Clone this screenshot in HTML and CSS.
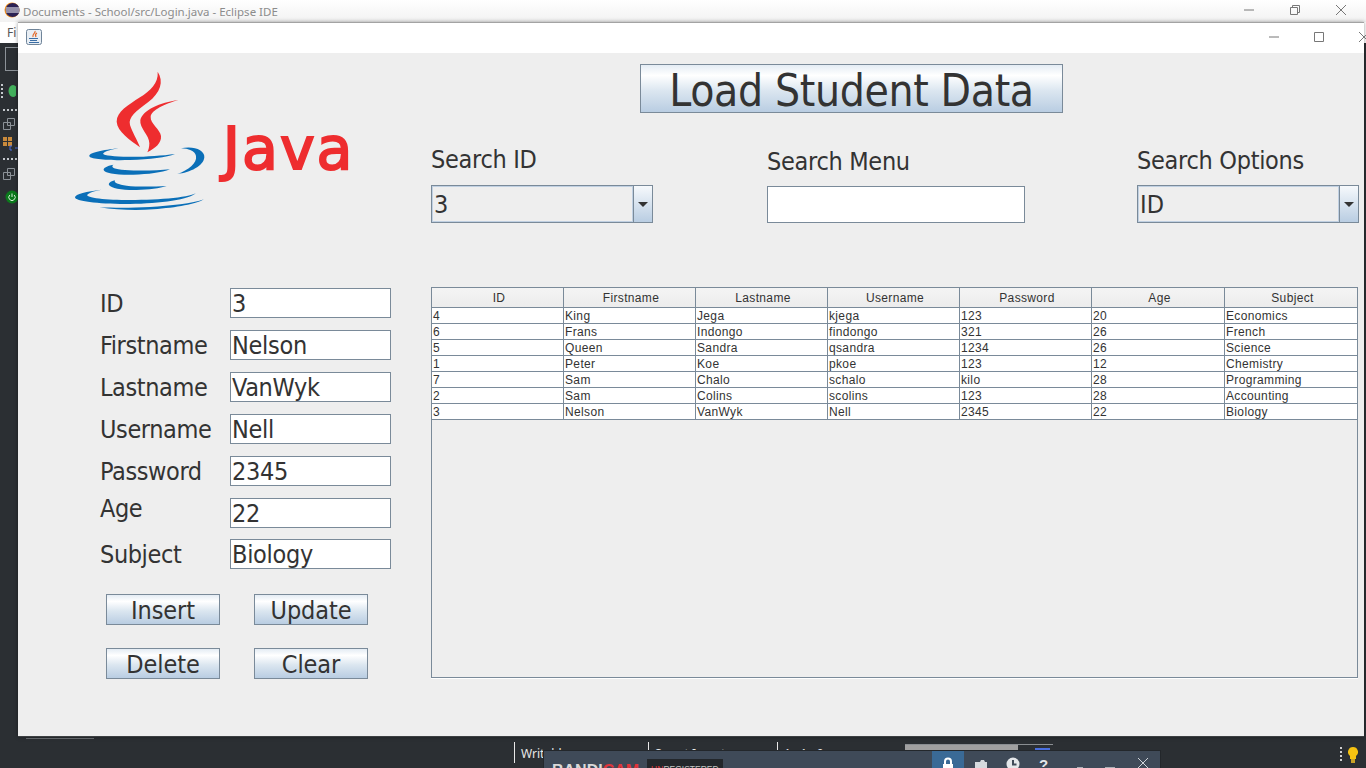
FILE: index.html

```html
<!DOCTYPE html>
<html lang="en">
<head>
    <meta charset="UTF-8">
    <meta name="viewport" content="width=device-width, initial-scale=1.0">
    <title>Student Data</title>
    <link rel="stylesheet" href="styles.css">
</head>
<body>
    <div class="desktop">
        <div class="ide-titlebar">
            <svg class="ide-logo" viewBox="0 0 16 16" width="16" height="16">
                <circle cx="8" cy="8" r="7.5" fill="#f7941e"/>
                <circle cx="8.6" cy="8" r="7" fill="#2c2255"/>
                <path d="M2 6h13M1.800 8h13.600M2 10h13" stroke="#fff" stroke-width="1"/>
            </svg>
            <span class="ide-title">Documents - School/src/Login.java - Eclipse IDE</span>
            <div class="win-controls ide-controls">
                <svg viewBox="0 0 12 12" width="12" height="12"><path d="M1 6h10" stroke="#777"/></svg>
                <svg viewBox="0 0 12 12" width="12" height="12"><path d="M1.500 3.500h7v7h-7zM3.500 3.500v-2h7v7h-2" fill="none" stroke="#777"/></svg>
                <svg viewBox="0 0 12 12" width="12" height="12"><path d="M1 1l10 10M11 1L1 11" stroke="#777"/></svg>
            </div>
        </div>
        <div class="ide-menu">Fi</div>
        <div class="ide-side">
            <div class="side-box"></div>
            <div class="side-perspective">
                <div class="side-grip"></div>
                <svg viewBox="0 0 16 14" width="16" height="14"><ellipse cx="13" cy="7" rx="4.500" ry="6" fill="#43b05c"/></svg>
            </div>
            <div class="side-dots"></div>
            <svg class="side-icon" viewBox="0 0 16 14" width="16" height="14"><path d="M7.500 1.500h7v7h-7zM3.500 5.500h7v7h-7z" fill="none" stroke="#8c9298"/></svg>
            <svg class="side-icon side-icon-outline" viewBox="0 0 16 16" width="16" height="16"><path d="M1 1h4v4H1zM6 1h4v4H6zM1 6h4v4H1zM6 6h4v4H6z" fill="#c98a3c"/><path d="M10 10H8v4h2M13 12h3" fill="none" stroke="#4a6fe0"/></svg>
            <div class="side-dots side-dots-low"></div>
            <svg class="side-icon" viewBox="0 0 16 14" width="16" height="14"><path d="M7.500 1.500h7v7h-7zM3.500 5.500h7v7h-7z" fill="none" stroke="#8c9298"/></svg>
            <svg class="side-icon side-icon-power" viewBox="0 0 14 14" width="14" height="14"><circle cx="7" cy="7" r="6.500" fill="#0b7a1c"/><path d="M7 3.500v3.500M4.800 5a3.200 3.200 0 1 0 4.400 0" fill="none" stroke="#d8f0d8"/></svg>
        </div>
        <div class="ide-tab-line"></div>

        <div class="status-bar">
            <span class="status-cell status-writable">Writable</span>
            <span class="status-cell status-insert">Smart Insert</span>
            <span class="status-cell status-pos">1 : 1 : 0</span>
            <div class="status-heap"><div class="status-heap-used"></div><div class="status-heap-mark"></div></div>
            <div class="status-grip"></div>
            <div class="status-bulb">
                <svg viewBox="0 0 10 16" width="10" height="16"><path d="M5 0a5 5 0 0 1 3 9v3H2V9a5 5 0 0 1 3-9z" fill="#f5c211"/><path d="M3 12h4v4H3z" fill="#c9a227"/></svg>
            </div>
        </div>

        <div class="bandicam">
            <span class="bandi-name">BANDI<em>CAM</em></span>
            <span class="bandi-tag"><em>UN</em>REGISTERED</span>
            <div class="bandi-tools">
                <span class="bandi-lock">
                    <svg viewBox="0 0 14 16" width="14" height="16"><path d="M4 7V4.500a3 3 0 0 1 6 0V7" fill="none" stroke="#fff" stroke-width="2"/><path d="M2 7h10v9H2z" fill="#fff"/></svg>
                </span>
                <svg class="bandi-folder" viewBox="0 0 14 16" width="14" height="16"><path d="M1 3h5l1-2h3l1 2h2v13H1z" fill="#d6dade"/></svg>
                <svg class="bandi-clock" viewBox="0 0 14 16" width="14" height="16"><circle cx="7" cy="7" r="6.500" fill="#e4e7ea"/><path d="M7 3v4.500h3.500" fill="none" stroke="#3f4a58" stroke-width="2"/></svg>
                <span class="bandi-help">?</span>
                <span class="bandi-min"></span>
                <span class="bandi-max"></span>
                <svg class="bandi-close" viewBox="0 0 12 12" width="12" height="12"><path d="M1 1l10 10M11 1L1 11" stroke="#cfd4d9"/></svg>
            </div>
        </div>

        <div class="java-window">
            <div class="window-title">
                <svg class="java-icon" viewBox="0 0 16 16" width="16" height="16">
                    <rect x="0.500" y="0.500" width="15" height="15" rx="2" fill="#e8eef4" stroke="#6f8499"/>
                    <path d="M9 2c1 2-3 3-2 6M11 4c-2 1-2 2-1 4" fill="none" stroke="#e2692a" stroke-width="1.200"/>
                    <path d="M3 9.500h9M4 11.500h7M3 13.500h10" stroke="#3b6ea5"/>
                </svg>
                <div class="win-controls java-controls">
                    <svg viewBox="0 0 12 12" width="12" height="12"><path d="M1 6h10" stroke="#777"/></svg>
                    <svg viewBox="0 0 12 12" width="12" height="12"><path d="M1.500 1.500h9v9h-9z" fill="none" stroke="#777"/></svg>
                    <svg viewBox="0 0 12 12" width="12" height="12"><path d="M1 1l10 10M11 1L1 11" stroke="#777"/></svg>
                </div>
            </div>

            <div class="window-body">
                <div class="left-panel">
                    <div class="logo">
                        <svg class="logo-mark" viewBox="45 30 852 429" width="284" height="143">
                            <path fill="#ee2d2f" d="M293 35C312 65 302 97 264 127C228 154 204 172 210 195C216 215 232 240 240 262C210 240 172 215 170 185C170 155 205 135 240 112C270 92 296 70 293 35Z"/>
                            <path fill="#ee2d2f" d="M355 120C300 128 248 150 241 180C238 205 268 225 268 250C268 262 265 270 262 277C285 265 305 250 303 228C301 208 270 190 272 170C274 150 315 132 355 120Z"/>
                            <path fill="#0a6fb8" d="M175 265C130 270 88 278 88 288C88 298 150 302 210 300C270 298 320 292 345 282C300 288 240 292 190 290C150 289 125 285 130 280C135 274 155 268 175 265Z"/>
                            <path fill="#0a6fb8" d="M363 265C400 256 435 270 433 292C431 318 390 338 352 342C385 330 412 310 408 288C405 272 385 266 363 265Z"/>
                            <path fill="#0a6fb8" d="M160 314C140 318 130 324 131 330C133 340 170 345 220 344C265 343 305 338 330 328C290 332 235 333 195 330C165 328 150 322 160 314Z"/>
                            <path fill="#0a6fb8" d="M165 361C150 365 145 370 147 375C152 385 190 391 230 390C265 389 300 385 320 378C280 380 230 381 200 377C175 374 160 368 165 361Z"/>
                            <path fill="#0a6fb8" d="M125 389C80 394 45 402 45 412C45 424 120 433 210 432C300 431 390 420 410 397C400 412 300 420 210 420C140 420 75 413 82 404C88 397 105 392 125 389Z"/>
                            <path fill="#0a6fb8" d="M118 442C170 450 230 452 280 448C350 443 410 432 432 418C400 430 330 438 270 441C220 444 165 444 118 442Z"/>
                            <text class="logo-word" x="488" y="328">Java</text>
                        </svg>
                    </div>

                    <div class="student-form">
                        <label class="form-label">ID</label>
                        <div class="text-field">3</div>
                        <label class="form-label">Firstname</label>
                        <div class="text-field">Nelson</div>
                        <label class="form-label">Lastname</label>
                        <div class="text-field">VanWyk</div>
                        <label class="form-label">Username</label>
                        <div class="text-field">Nell</div>
                        <label class="form-label">Password</label>
                        <div class="text-field">2345</div>
                        <label class="form-label form-label-age">Age</label>
                        <div class="text-field">22</div>
                        <label class="form-label form-last">Subject</label>
                        <div class="text-field form-last">Biology</div>
                    </div>

                    <div class="form-buttons">
                        <button class="nimbus-btn">Insert</button>
                        <button class="nimbus-btn">Update</button>
                        <button class="nimbus-btn">Delete</button>
                        <button class="nimbus-btn">Clear</button>
                    </div>
                </div>

                <div class="right-panel">
                    <button class="nimbus-btn load-btn">Load Student Data</button>

                    <div class="search-row">
                        <div class="search-field">
                            <label class="search-label">Search ID</label>
                            <div class="combo">
                                <span class="combo-value">3</span>
                                <span class="combo-arrow"></span>
                            </div>
                        </div>
                        <div class="search-field">
                            <label class="search-label search-label-menu">Search Menu</label>
                            <div class="text-field search-input"></div>
                        </div>
                        <div class="search-field">
                            <label class="search-label search-label-options">Search Options</label>
                            <div class="combo">
                                <span class="combo-value">ID</span>
                                <span class="combo-arrow"></span>
                            </div>
                        </div>
                    </div>

                    <div class="table-pane">
                        <table class="data-table">
                            <thead>
                                <tr><th>ID</th><th>Firstname</th><th>Lastname</th><th>Username</th><th>Password</th><th>Age</th><th>Subject</th></tr>
                            </thead>
                            <tbody>
                                <tr><td>4</td><td>King</td><td>Jega</td><td>kjega</td><td>123</td><td>20</td><td>Economics</td></tr>
                                <tr><td>6</td><td>Frans</td><td>Indongo</td><td>findongo</td><td>321</td><td>26</td><td>French</td></tr>
                                <tr><td>5</td><td>Queen</td><td>Sandra</td><td>qsandra</td><td>1234</td><td>26</td><td>Science</td></tr>
                                <tr><td>1</td><td>Peter</td><td>Koe</td><td>pkoe</td><td>123</td><td>12</td><td>Chemistry</td></tr>
                                <tr><td>7</td><td>Sam</td><td>Chalo</td><td>schalo</td><td>kilo</td><td>28</td><td>Programming</td></tr>
                                <tr><td>2</td><td>Sam</td><td>Colins</td><td>scolins</td><td>123</td><td>28</td><td>Accounting</td></tr>
                                <tr><td>3</td><td>Nelson</td><td>VanWyk</td><td>Nell</td><td>2345</td><td>22</td><td>Biology</td></tr>
                            </tbody>
                        </table>
                    </div>
                </div>
            </div>
        </div>
    </div>
</body>
</html>
```

FILE: styles.css

```css
body {
    margin: 0;
    overflow: hidden;
    font-family: "DejaVu Sans", sans-serif;
    font-stretch: condensed;
}
.desktop {
    position: relative;
    width: 1366px;
    height: 768px;
    overflow: hidden;
    background-color: #2b2f33;
    display: flex;
    flex-direction: column;
}

/* eclipse behind the app */
.ide-titlebar {
    height: 22px;
    background: linear-gradient(#ffffff, #f2f2f2);
    display: flex;
    align-items: center;
    padding-left: 4px;
    font-family: "Noto Sans", sans-serif;
    font-stretch: normal;
}
.ide-logo {
    margin-right: 3px;
    margin-top: -2px;
}
.ide-title {
    font-size: 11.5px;
    color: #8c8c8c;
}
.win-controls {
    display: flex;
}
.ide-controls {
    gap: 34px;
    margin: -3px 19px 0 auto;
}
.ide-menu {
    height: 21px;
    background-color: #ffffff;
    padding-left: 7px;
    font: 12px/21px "Noto Sans", sans-serif;
    color: #555555;
}
.ide-side {
    width: 18px;
    display: flex;
    flex-direction: column;
    align-items: flex-start;
}
.side-box {
    width: 16px;
    height: 24px;
    margin: 4px 0 0 5px;
    border: 1px solid #8c9298;
    box-sizing: border-box;
}
.side-perspective {
    display: flex;
    margin-top: 13px;
}
.side-grip {
    width: 2px;
    height: 14px;
    margin-left: 1px;
    margin-right: -3px;
    background-image: linear-gradient(#c4c8cc 50%, transparent 50%);
    background-size: 2px 4px;
}
.side-dots {
    width: 16px;
    height: 2px;
    margin: 11px 0 6px 3px;
    background-image: linear-gradient(90deg, #c4c8cc 50%, transparent 50%);
    background-size: 4px 2px;
}
.side-dots-low {
    margin: 4px 0 7px 3px;
}
.side-icon {
    margin-bottom: 5px;
}
.side-icon-outline {
    margin: 0 0 2px 2px;
}
.side-icon-power {
    margin: 4px 0 0 5px;
}
.ide-tab-line {
    position: absolute;
    left: 26px;
    top: 738px;
    width: 68px;
    height: 1px;
    background-color: #6c7074;
}

/* status bar */
.status-bar {
    position: absolute;
    left: 0;
    right: 0;
    bottom: 0;
    height: 27px;
    font: 12px "Noto Sans", sans-serif;
    color: #e8e8e8;
}
.status-cell {
    position: absolute;
    top: 1px;
    height: 21px;
    padding-left: 6px;
    border-left: 1px solid #e8e8e8;
    line-height: 24px;
}
.status-writable { left: 514px; }
.status-insert { left: 648px; }
.status-pos { left: 777px; }
.status-heap {
    position: absolute;
    left: 905px;
    top: 3px;
    width: 148px;
    height: 7px;
    box-sizing: border-box;
    border-top: 1px solid #8a8e92;
    display: flex;
}
.status-heap-used {
    width: 113px;
    background-color: #a0a0a0;
}
.status-heap-mark {
    width: 15px;
    height: 3px;
    margin: 3px 0 0 17px;
    background-color: #4a6fe0;
}
.status-grip {
    position: absolute;
    left: 1340px;
    top: 6px;
    width: 2px;
    height: 15px;
    background-image: linear-gradient(#d0d0d0 50%, transparent 50%);
    background-size: 2px 4px;
}
.status-bulb {
    position: absolute;
    left: 1348px;
    top: 6px;
}

.bandicam {
    position: absolute;
    left: 543px;
    top: 750px;
    width: 618px;
    height: 18px;
    box-sizing: border-box;
    border: 1px solid #23272b;
    border-bottom: none;
    background-color: #3f4a58;
    display: flex;
    overflow: hidden;
    z-index: 1;
}
.bandi-name {
    margin: 10px 0 0 8px;
    font: bold 16px/20px "Liberation Sans", sans-serif;
    color: #d9d9d9;
}
.bandi-name em,
.bandi-tag em {
    font-style: normal;
    color: #e0343a;
}
.bandi-tag {
    height: 20px;
    margin: 8px 0 0 8px;
    padding: 0 4px;
    background-color: #23272b;
    font: 8.500px/20px "Liberation Sans", sans-serif;
    color: #c4c4c4;
}
.bandi-tools {
    position: absolute;
    left: 388px;
    top: 0;
    height: 18px;
    display: flex;
    align-items: flex-start;
}
.bandi-lock {
    width: 32px;
    height: 18px;
    background-color: #3a6a96;
    display: flex;
    justify-content: center;
    padding-top: 6px;
    box-sizing: border-box;
}
.bandi-folder {
    margin: 8px 0 0 10px;
}
.bandi-clock {
    margin: 6px 0 0 18px;
}
.bandi-help {
    margin: 5px 0 0 19px;
    font: bold 15px/18px "Liberation Sans", sans-serif;
    color: #e4e7ea;
}
.bandi-min,
.bandi-max {
    height: 2px;
    background-color: #aab0b6;
    margin-top: 16px;
}
.bandi-min {
    width: 6px;
    margin-left: 29px;
}
.bandi-max {
    width: 10px;
    margin-left: 22px;
}
.bandi-close {
    margin: 6px 0 0 22px;
}

/* java swing window */
.java-window {
    position: absolute;
    left: 18px;
    top: 22px;
    width: 1346px;
    height: 715px;
    box-sizing: border-box;
    border-top: 1px solid #a3a3a3;
    border-bottom: 1px solid #3c3f42;
    background-color: #eeeeee;
    box-shadow: 0 0 4px rgba(0, 0, 0, 0.4);
    z-index: 2;
}
.window-title {
    height: 30px;
    background-color: #ffffff;
    display: flex;
    align-items: center;
    padding-left: 8px;
}
.java-icon {
    margin-top: -2px;
}
.java-controls {
    gap: 33px;
    margin: -2px -6px 0 auto;
}
.window-body {
    display: flex;
}
.left-panel {
    width: 413px;
    flex-shrink: 0;
}
.logo {
    padding: 17px 0 0 57px;
    height: 143px;
}
.logo-mark {
    display: block;
    overflow: visible;
}
.logo-word {
    font-family: "DejaVu Sans", sans-serif;
    font-stretch: normal;
    font-size: 176px;
    letter-spacing: 6px;
    fill: #ee2d2f;
    stroke: #ee2d2f;
    stroke-width: 6px;
}
.student-form {
    display: grid;
    grid-template-columns: 130px 161px;
    grid-auto-rows: 30px;
    row-gap: 12px;
    margin: 75px 0 0 82px;
}
.form-label {
    font-size: 25px;
    letter-spacing: -0.4px;
    line-height: 32px;
    color: #333333;
    white-space: nowrap;
}
.form-label-age {
    margin-top: -5px;
}
.form-last {
    margin-top: -1px;
}
.text-field {
    box-sizing: border-box;
    height: 30px;
    padding: 0 1px;
    border: 1px solid #7a8a99;
    background-color: #ffffff;
    font-size: 25px;
    letter-spacing: -0.3px;
    line-height: 30px;
    color: #333333;
    white-space: nowrap;
}
.form-buttons {
    display: grid;
    grid-template-columns: 114px 114px;
    grid-auto-rows: 31px;
    column-gap: 34px;
    row-gap: 23px;
    margin: 24px 0 0 88px;
}
.nimbus-btn {
    box-sizing: border-box;
    padding: 2px 0 0;
    border: 1px solid #7a8a99;
    background: linear-gradient(#e4ecf4 0%, #ffffff 22%, #dbe6f0 55%, #b9cde2 100%);
    font-family: "DejaVu Sans", sans-serif;
    font-stretch: condensed;
    font-size: 25px;
    letter-spacing: -0.1px;
    line-height: 27px;
    color: #333333;
    white-space: nowrap;
}

.right-panel {
    flex: 1;
}
.load-btn {
    display: block;
    width: 423px;
    height: 49px;
    margin: 11px 0 0 209px;
    font-size: 44px;
    letter-spacing: -0.35px;
    line-height: 47px;
}
.search-row {
    display: grid;
    grid-template-columns: 336px 370px 222px;
    margin-top: 26px;
}
.search-field {
    display: flex;
    flex-direction: column;
}
.search-label {
    height: 46px;
    font-size: 25px;
    letter-spacing: -0.3px;
    line-height: 42px;
    color: #333333;
    white-space: nowrap;
}
.search-label-menu {
    height: 45px;
    padding-top: 2px;
}
.search-label-options {
    height: 45px;
    padding-top: 1px;
}
.search-input {
    width: 258px;
    height: 37px;
}
.combo {
    box-sizing: border-box;
    width: 222px;
    height: 38px;
    border: 1px solid #7a8a99;
    background-color: #eeeeee;
    display: flex;
}
.combo-value {
    flex: 1;
    border: 1px solid #c0d0e2;
    padding-left: 1px;
    font-size: 25px;
    line-height: 36px;
    color: #333333;
}
.combo-arrow {
    position: relative;
    width: 18px;
    border-left: 1px solid #7a8a99;
    background: linear-gradient(#f6f9fc, #b9cde2);
}
.combo-arrow::after {
    content: "";
    position: absolute;
    left: 4px;
    top: 16px;
    border-left: 5px solid transparent;
    border-right: 5px solid transparent;
    border-top: 5px solid #333333;
}
.table-pane {
    box-sizing: border-box;
    width: 927px;
    height: 391px;
    margin-top: 64px;
    border: 1px solid #7a8a99;
    background-color: #eeeeee;
    box-shadow: 0 1px 0 #ffffff;
}
.data-table {
    width: 925px;
    table-layout: fixed;
    border-collapse: separate;
    border-spacing: 0;
    font-family: "Liberation Sans", sans-serif;
    font-stretch: normal;
    font-size: 12px;
    letter-spacing: 0.35px;
    color: #333333;
}
.data-table th {
    box-sizing: border-box;
    width: 132px;
    height: 20px;
    padding: 2px 0 0 3px;
    border-right: 1px solid #7a8a99;
    border-bottom: 1px solid #7a8a99;
    background: linear-gradient(#f4f4f4, #ececec);
    font-weight: normal;
    line-height: 17px;
}
.data-table th:nth-child(6) {
    width: 133px;
}
.data-table td {
    box-sizing: border-box;
    height: 16px;
    padding: 1px 1px 0;
    border-right: 1px solid #7a8a99;
    border-bottom: 1px solid #7a8a99;
    background-color: #ffffff;
    line-height: 14px;
    overflow: hidden;
}
.data-table th:last-child,
.data-table td:last-child {
    border-right: none;
}
```
